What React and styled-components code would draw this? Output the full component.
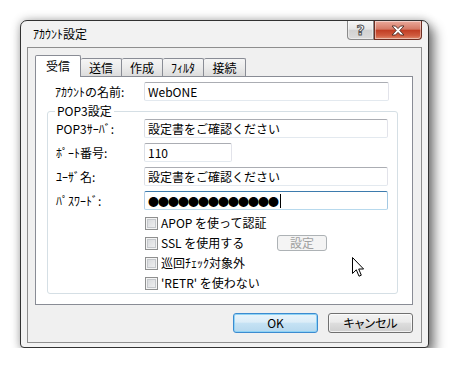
import React from 'react';
import styled, { createGlobalStyle } from 'styled-components';

const GlobalStyle = createGlobalStyle`
  html, body { margin: 0; padding: 0; background: #ffffff; }
  body {
    font-family: "Noto Sans CJK JP", "Noto Sans", sans-serif;
    font-size: 12px;
    color: #000;
  }
  * { box-sizing: border-box; }
`;

const Window = styled.div`
  position: relative;
  margin: 20px 0 0 20px;
  width: 409px;
  height: 328px;
  border: 1px solid #323232;
  border-radius: 7px 7px 4px 4px;
  background: #f2f2f2;
  box-shadow: 0 0 10px rgba(0, 0, 0, 0.3), 6px 7px 12px rgba(0, 0, 0, 0.45);
  padding: 0 6px 4px 6px;
  display: flex;
  flex-direction: column;
`;

const TitleBar = styled.div`
  height: 26px;
  display: flex;
  align-items: flex-start;
  padding-left: 6px;
`;

const Title = styled.div`
  flex: 1;
  margin-top: 5px;
  line-height: 16px;
  font-size: 12px;
`;

const CaptionButton = styled.div`
  height: 19px;
  width: ${p => p.$w}px;
  display: flex;
  align-items: center;
  justify-content: center;
  border: 1px solid ${p => (p.$close ? '#6e2e22' : '#8a8a8a')};
  border-top: none;
  border-radius: ${p => (p.$close ? '0 0 4px 0' : '0 0 0 4px')};
  background: ${p =>
    p.$close
      ? 'linear-gradient(#ebaa9c, #d57a66 45%, #c13e24 52%, #cf5a3e 80%, #e08a6c)'
      : 'linear-gradient(#f6f6f6, #e6e6e6 45%, #d2d2d2 52%, #dcdcdc)'};
  box-shadow: inset 0 0 0 1px rgba(255, 255, 255, 0.45);
`;

const HelpGlyph = styled.span`
  font-family: "DejaVu Sans", sans-serif;
  font-size: 14px;
  font-weight: bold;
  line-height: 14px;
  color: #fbfbfb;
  -webkit-text-stroke: 1px #555;
`;

const Client = styled.div`
  flex: 1;
  border: 1px solid #8e8e8e;
  background: #f0f0f0;
  padding: 7px 8px 0 7px;
  display: flex;
  flex-direction: column;
`;

const TabStrip = styled.div`
  display: flex;
  align-items: flex-end;
  height: 21px;
`;

const Tab = styled.div`
  position: relative;
  z-index: ${p => (p.$active ? 2 : 1)};
  width: ${p => p.$w}px;
  height: ${p => (p.$active ? 22 : 18)}px;
  margin-bottom: ${p => (p.$active ? -1 : 0)}px;
  border: 1px solid #898c95;
  border-bottom: none;
  border-left: ${p => (p.$active ? '1px solid #898c95' : 'none')};
  border-radius: 2px 2px 0 0;
  background: ${p =>
    p.$active ? '#ffffff' : 'linear-gradient(#f5f5f5, #ebebeb 50%, #dcdcdc)'};
  display: flex;
  justify-content: center;
  align-items: ${p => (p.$active ? 'flex-start' : 'center')};
  padding-top: ${p => (p.$active ? 2 : 0)}px;
  font-size: 12px;
  line-height: 16px;
  white-space: nowrap;
`;

const Panel = styled.div`
  height: 229px;
  border: 1px solid #898c95;
  background: #ffffff;
  padding: 5px 23px 0 19px;
`;

const FieldRow = styled.div`
  display: grid;
  grid-template-columns: ${p => p.$label}px auto;
  align-items: center;
  height: 19px;
`;

const Label = styled.span`
  font-size: 12px;
  line-height: 16px;
  white-space: nowrap;
`;

const TextBox = styled.div`
  height: 19px;
  width: ${p => p.$w}px;
  border: 1px solid;
  border-color: ${p =>
    p.$focus ? '#3d7bad #a4c9e3 #b7d9ed #b5cfe7' : '#abadb3 #e2e3ea #e3e9ef #dbdfe6'};
  border-radius: 2px;
  background: #fff;
  padding: 0 3px;
  display: flex;
  align-items: center;
  font-size: 12px;
  line-height: 16px;
  white-space: nowrap;
  overflow: hidden;
`;

const Dots = styled.span`
  font-size: 11px;
  letter-spacing: -1px;
  line-height: 14px;
`;

const Caret = styled.span`
  width: 1px;
  height: 14px;
  background: #000;
  margin-left: 2px;
`;

const Group = styled.fieldset`
  margin: 3px 0 0 -8px;
  width: 351px;
  border: 1px solid #d5dfe5;
  border-radius: 3px;
  padding: 1px 8px 0 8px;
  display: flex;
  flex-direction: column;
  gap: 5px;
`;

const Legend = styled.legend`
  padding: 0 2px;
  margin-left: -1px;
  font-size: 12px;
  line-height: 14px;
`;

const Checks = styled.div`
  margin: -2px 0 0 89px;
  display: grid;
  grid-template-columns: 132px 50px;
  grid-auto-rows: 20px;
  align-items: center;
`;

const CheckItem = styled.label`
  grid-column: 1;
  display: flex;
  align-items: center;
  gap: 3px;
  font-size: 12px;
  line-height: 16px;
  white-space: nowrap;
`;

const Box = styled.span`
  width: 13px;
  height: 13px;
  border: 1px solid #8e8f8f;
  background: linear-gradient(135deg, #d3d5d8, #f4f4f4);
  box-shadow: inset 0 0 0 1px #f4f4f4, inset 0 0 0 2px #c5c8cc;
`;

const SmallButton = styled.div`
  grid-column: 2;
  height: 16px;
  border: 1px solid #adb2b5;
  border-radius: 3px;
  background: #f4f4f4;
  color: #a0a0a0;
  display: flex;
  align-items: center;
  justify-content: center;
  font-size: 12px;
  line-height: 14px;
`;

const ButtonRow = styled.div`
  display: flex;
  justify-content: flex-end;
  gap: 10px;
  margin-top: 8px;
`;

const Button = styled.div`
  width: 85px;
  height: 20px;
  border: 1px solid ${p => (p.$default ? '#3c8bd0' : '#707070')};
  border-radius: 3px;
  background: ${p =>
    p.$default
      ? 'linear-gradient(#e8f4fb, #dcedf8 45%, #c5e2f4 52%, #b6d8ee)'
      : 'linear-gradient(#f2f2f2, #ebebeb 45%, #dddddd 52%, #cfcfcf)'};
  box-shadow: ${p =>
    p.$default ? 'inset 0 0 0 1px #8fd3f5' : 'inset 0 0 0 1px rgba(255,255,255,0.7)'};
  display: flex;
  align-items: center;
  justify-content: center;
  font-size: 12px;
  line-height: 14px;
  font-feature-settings: "palt";
`;

const Pointer = styled.svg`
  position: absolute;
  left: 331px;
  top: 236px;
`;

const tabs = [
  { t: '受信', w: 46, active: true },
  { t: '送信', w: 41 },
  { t: '作成', w: 41 },
  { t: 'ﾌｨﾙﾀ', w: 41 },
  { t: '接続', w: 42 },
];

const checks = ['APOP を使って認証', 'SSL を使用する', '巡回ﾁｪｯｸ対象外', "'RETR' を使わない"];

export default function App() {
  return (
    <>
      <GlobalStyle />
      <Window>
        <TitleBar>
          <Title>ｱｶｳﾝﾄ設定</Title>
          <CaptionButton $w={27}>
            <HelpGlyph>?</HelpGlyph>
          </CaptionButton>
          <CaptionButton $w={48} $close>
            <svg width="14" height="11" viewBox="0 0 14 11">
              <path
                d="M1 1 H4.5 L7 3.6 L9.5 1 H13 L8.8 5.5 L13 10 H9.5 L7 7.4 L4.5 10 H1 L5.2 5.5 Z"
                fill="#ffffff"
                stroke="#4a2a24"
                strokeWidth="0.9"
                strokeLinejoin="round"
              />
            </svg>
          </CaptionButton>
        </TitleBar>
        <Client>
          <TabStrip>
            {tabs.map(tab => (
              <Tab key={tab.t} $w={tab.w} $active={tab.active}>
                {tab.t}
              </Tab>
            ))}
          </TabStrip>
          <Panel>
            <FieldRow $label={89}>
              <Label>ｱｶｳﾝﾄの名前:</Label>
              <TextBox $w={245}>WebONE</TextBox>
            </FieldRow>
            <Group>
              <Legend>POP3設定</Legend>
              <FieldRow $label={88}>
                <Label>POP3ｻｰﾊﾞ:</Label>
                <TextBox $w={244}>設定書をご確認ください</TextBox>
              </FieldRow>
              <FieldRow $label={88}>
                <Label>ﾎﾟｰﾄ番号:</Label>
                <TextBox $w={88}>110</TextBox>
              </FieldRow>
              <FieldRow $label={88}>
                <Label>ﾕｰｻﾞ名:</Label>
                <TextBox $w={244}>設定書をご確認ください</TextBox>
              </FieldRow>
              <FieldRow $label={88}>
                <Label>ﾊﾟｽﾜｰﾄﾞ:</Label>
                <TextBox $w={244} $focus>
                  <Dots>●●●●●●●●●●●●●</Dots>
                  <Caret />
                </TextBox>
              </FieldRow>
              <Checks>
                {checks.map((c, i) => (
                  <React.Fragment key={c}>
                    <CheckItem>
                      <Box />
                      {c}
                    </CheckItem>
                    {i === 1 && <SmallButton>設定</SmallButton>}
                  </React.Fragment>
                ))}
              </Checks>
            </Group>
          </Panel>
          <ButtonRow>
            <Button $default>OK</Button>
            <Button>キャンセル</Button>
          </ButtonRow>
        </Client>
        <Pointer width="13" height="21" viewBox="0 0 13 21">
          <path
            d="M0.5 0.5 V16.5 L4.3 12.8 L7 19.2 L9.3 18.2 L6.7 12 H11.6 Z"
            fill="#ffffff"
            stroke="#000"
            strokeWidth="1"
            strokeLinejoin="miter"
          />
        </Pointer>
      </Window>
    </>
  );
}
